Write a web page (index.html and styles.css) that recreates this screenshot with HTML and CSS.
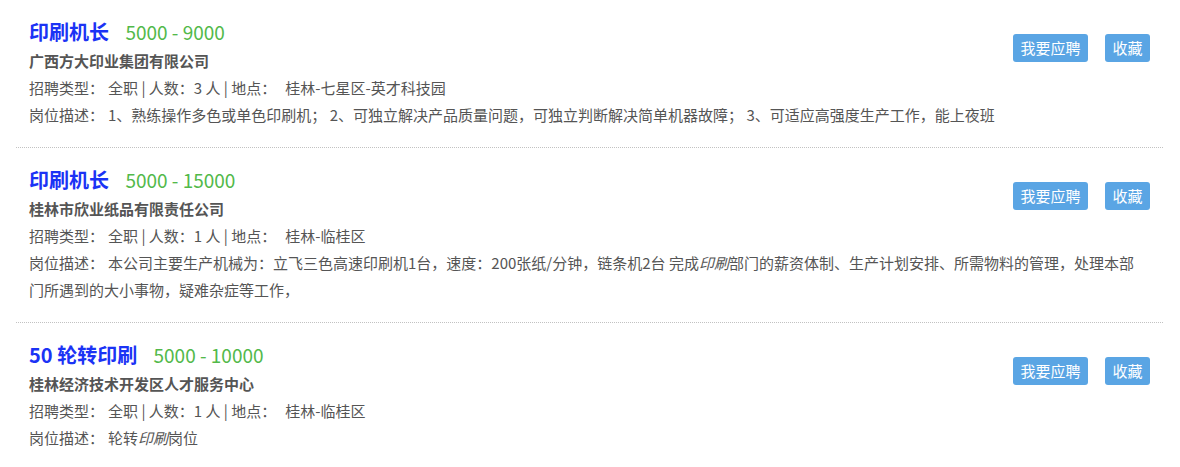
FILE: index.html
```html
<!DOCTYPE html>
<html lang="zh-CN">
<head>
    <meta charset="UTF-8">
    <meta name="viewport" content="width=device-width, initial-scale=1.0">
    <title>职位列表</title>
    <link rel="stylesheet" href="styles.css">
</head>
<body>

    <div class="job-list">
        <div class="job-item">
            <div class="job-actions">
                <a href="#" class="btn">我要应聘</a>
                <a href="#" class="btn">收藏</a>
            </div>
            <div class="job-title">
                <a href="#" class="job-name">印刷机长</a>
                <span class="salary">5000 - 9000</span>
            </div>
            <div class="company">广西方大印业集团有限公司</div>
            <div class="job-info">
                <span class="label">招聘类型：</span>全职 | 人数：3 人 | 地点：<span class="place">桂林-七星区-英才科技园</span>
            </div>
            <div class="job-info">
                <span class="label">岗位描述：</span>1、熟练操作多色或单色印刷机； 2、可独立解决产品质量问题，可独立判断解决简单机器故障； 3、可适应高强度生产工作，能上夜班
            </div>
        </div>

        <div class="job-item">
            <div class="job-actions">
                <a href="#" class="btn">我要应聘</a>
                <a href="#" class="btn">收藏</a>
            </div>
            <div class="job-title">
                <a href="#" class="job-name">印刷机长</a>
                <span class="salary">5000 - 15000</span>
            </div>
            <div class="company">桂林市欣业纸品有限责任公司</div>
            <div class="job-info">
                <span class="label">招聘类型：</span>全职 | 人数：1 人 | 地点：<span class="place">桂林-临桂区</span>
            </div>
            <div class="job-info">
                <span class="label">岗位描述：</span>本公司主要生产机械为：立飞三色高速印刷机1台，速度：200张纸/分钟，链条机2台 完成<em>印刷</em>部门的薪资体制、生产计划安排、所需物料的管理，处理本部门所遇到的大小事物，疑难杂症等工作，
            </div>
        </div>

        <div class="job-item">
            <div class="job-actions">
                <a href="#" class="btn">我要应聘</a>
                <a href="#" class="btn">收藏</a>
            </div>
            <div class="job-title">
                <a href="#" class="job-name">50 轮转印刷</a>
                <span class="salary">5000 - 10000</span>
            </div>
            <div class="company">桂林经济技术开发区人才服务中心</div>
            <div class="job-info">
                <span class="label">招聘类型：</span>全职 | 人数：1 人 | 地点：<span class="place">桂林-临桂区</span>
            </div>
            <div class="job-info">
                <span class="label">岗位描述：</span>轮转<em>印刷</em>岗位
            </div>
        </div>
    </div>

</body>
</html>
```

FILE: styles.css
```css
body {
    margin: 0;
    font-family: "Microsoft YaHei", "Noto Sans CJK SC", sans-serif;
    font-size: 15px;
    color: #555;
    background-color: #fff;
}
.job-list {
    margin: 0 17px 0 16px;
}
.job-item {
    padding: 17px 13px 19px;
    border-bottom: 1px dotted #c2c2c2;
}
.job-item:last-child {
    border-bottom: none;
}
.job-item::after {
    content: "";
    display: block;
    clear: both;
}
.job-actions {
    float: right;
    margin-top: 17px;
    display: flex;
    gap: 17px;
}
.btn {
    display: inline-block;
    height: 28px;
    line-height: 28px;
    padding: 0 7.5px;
    font-size: 15px;
    color: #fff;
    background-color: #5aa5e4;
    border-radius: 3px;
    text-decoration: none;
}
.job-title {
    height: 30px;
    line-height: 30px;
}
.job-name {
    font-size: 20px;
    font-weight: bold;
    color: #1b33f5;
    text-decoration: none;
}
.salary {
    margin-left: 13px;
    font-size: 19px;
    color: #52b94a;
}
.company {
    line-height: 27px;
    font-weight: bold;
}
.job-info {
    line-height: 27px;
    margin-right: 8px;
}
.label {
    margin-right: 4px;
}
.place {
    margin-left: 9px;
}
```
